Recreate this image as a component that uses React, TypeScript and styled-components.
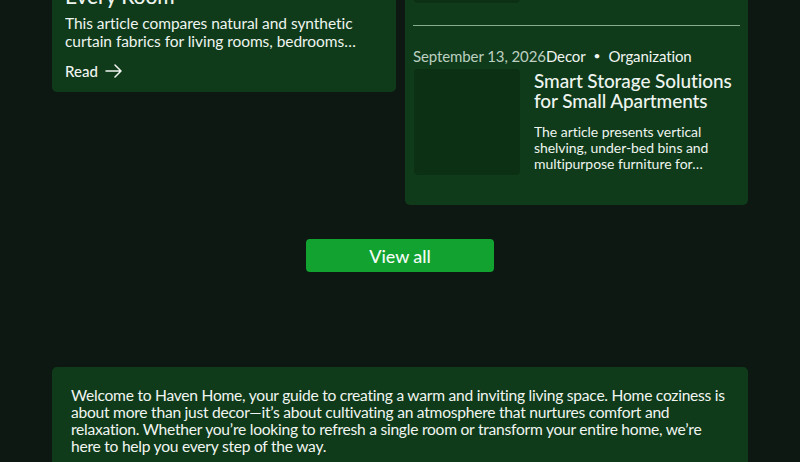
import React from "react";
import styled, { createGlobalStyle } from "styled-components";

const Global = createGlobalStyle`
  html, body { margin: 0; padding: 0; background: #0c1811; }
  body { font-family: "Lato", "Noto Sans", sans-serif; color: #eef4ef; overflow: hidden; }
  * { box-sizing: border-box; }
`;

const Page = styled.div`
  width: 800px;
  height: 462px;
  overflow: hidden;
  background: #0c1811;
`;

const Container = styled.div`
  width: 696px;
  margin: -154px auto 0;
  display: flex;
  flex-direction: column;
  align-items: center;
`;

const Grid = styled.div`
  width: 100%;
  display: grid;
  grid-template-columns: 344px 343px;
  column-gap: 9px;
  align-items: start;
`;

const Card = styled.article`
  background: #0f3b1a;
  border-radius: 5px;
  overflow: hidden;
`;

const Cover = styled.div<{ $h: number }>`
  height: ${(p) => p.$h}px;
  background: #0b2f14;
`;

const CardBody = styled.div`
  padding: 13px 24px 13px 13px;
  display: flex;
  flex-direction: column;
`;

const Meta = styled.div`
  display: flex;
  align-items: center;
  font-size: 15px;
  line-height: 16px;
  letter-spacing: -0.1px;
  color: #f1f5f1;
  white-space: nowrap;
`;

const Date = styled.span`
  color: #bccfc0;
`;

const Dot = styled.span`
  margin: 0 8px;
  font-size: 12px;
`;

const BigTitle = styled.h3`
  margin: 8px 0 0;
  font-size: 21px;
  line-height: 24px;
  font-weight: 500;
  letter-spacing: -0.1px;
`;

const Desc = styled.p<{ $size: number; $lh: number; $lines: number }>`
  margin: 0;
  font-size: ${(p) => p.$size}px;
  line-height: ${(p) => p.$lh}px;
  letter-spacing: -0.05px;
  display: -webkit-box;
  -webkit-box-orient: vertical;
  -webkit-line-clamp: ${(p) => p.$lines};
  overflow: hidden;
`;

const LeftDesc = styled(Desc)`
  margin-top: 6px;
`;

const ReadLink = styled.a`
  margin-top: 13px;
  display: inline-flex;
  align-items: center;
  gap: 7px;
  font-size: 15px;
  line-height: 16px;
  font-weight: 500;
  color: #f1f5f1;
  text-decoration: none;
`;

const ListCard = styled(Card)`
  padding: 8px 8px 8px;
`;

const Item = styled.div<{ $divider?: boolean }>`
  padding: 22px 0;
  border-top: ${(p) => (p.$divider ? "1px solid #86ab8e" : "none")};
  display: flex;
  flex-direction: column;
  gap: 5px;
`;

const ItemRow = styled.div`
  display: flex;
  gap: 14px;
`;

const Thumb = styled.div`
  width: 106px;
  height: 106px;
  flex: none;
  margin-left: 1px;
  background: #0b3014;
  border-radius: 4px;
`;

const ItemText = styled.div`
  width: 198px;
  padding-top: 2px;
  display: flex;
  flex-direction: column;
  gap: 13px;
`;

const ItemTitle = styled.h4`
  margin: 0;
  font-size: 19px;
  line-height: 20px;
  font-weight: 500;
  letter-spacing: -0.1px;
`;

const ViewAll = styled.button`
  margin-top: 34px;
  width: 188px;
  height: 33px;
  border: none;
  border-radius: 4px;
  background: #12a230;
  color: #f3fbf4;
  font-family: inherit;
  font-size: 18px;
  font-weight: 500;
  letter-spacing: -0.1px;
  cursor: pointer;
`;

const Intro = styled.section`
  margin-top: 95px;
  width: 100%;
  background: #0f3b1a;
  border-radius: 5px;
  padding: 20px 14px 20px 19px;
`;

const IntroText = styled.p`
  margin: 0;
  font-size: 15.6px;
  line-height: 17px;
  letter-spacing: -0.25px;
  color: #f1f5f1;
`;

const Arrow = () => (
  <svg width="17" height="14" viewBox="0 0 17 14" fill="none" stroke="#f1f5f1" strokeWidth="1.5" strokeLinecap="round" strokeLinejoin="round">
    <path d="M1 7h15M10 1l6 6-6 6" />
  </svg>
);

export default function App() {
  return (
    <Page>
      <Global />
      <Container>
        <Grid>
          <Card>
            <Cover $h={77} />
            <CardBody>
              <Meta>
                <Date>September 20, 2026</Date>Decor<Dot>•</Dot>Textiles
              </Meta>
              <BigTitle>
                Choosing Curtain Fabrics for
                <br />
                Every Room
              </BigTitle>
              <LeftDesc $size={15.5} $lh={18} $lines={2}>
                This article compares natural and synthetic curtain fabrics for living rooms, bedrooms and kitchens.
              </LeftDesc>
              <ReadLink href="#">
                Read <Arrow />
              </ReadLink>
            </CardBody>
          </Card>
          <ListCard>
            <Item>
              <Meta>
                <Date>September 15, 2026</Date>Decor<Dot>•</Dot>Lighting
              </Meta>
              <ItemRow>
                <Thumb />
                <ItemText>
                  <ItemTitle>Layered Lighting for a Cozy Evening</ItemTitle>
                </ItemText>
              </ItemRow>
            </Item>
            <Item $divider>
              <Meta>
                <Date>September 13, 2026</Date>Decor<Dot>•</Dot>Organization
              </Meta>
              <ItemRow>
                <Thumb />
                <ItemText>
                  <ItemTitle>Smart Storage Solutions for Small Apartments</ItemTitle>
                  <Desc $size={14} $lh={16} $lines={3}>
                    The article presents vertical shelving, under-bed bins and multipurpose furniture for maximizing every square meter.
                  </Desc>
                </ItemText>
              </ItemRow>
            </Item>
          </ListCard>
        </Grid>
        <ViewAll>View all</ViewAll>
        <Intro>
          <IntroText>
            Welcome to Haven Home, your guide to creating a warm and inviting living space. Home coziness is about more than just decor—it’s about cultivating an atmosphere that nurtures comfort and relaxation. Whether you’re looking to refresh a single room or transform your entire home, we’re
            <br />
            here to help you every step of the way.
          </IntroText>
        </Intro>
      </Container>
    </Page>
  );
}
